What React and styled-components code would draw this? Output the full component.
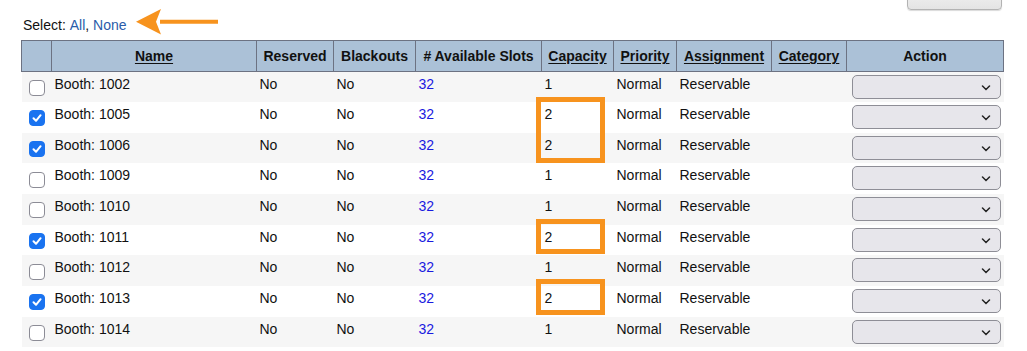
import styled, { createGlobalStyle } from "styled-components";

const GlobalStyle = createGlobalStyle`
  body {
    margin: 0;
    background: #fff;
    font-family: "Liberation Sans", Arial, sans-serif;
    font-size: 14px;
    color: #111;
  }
`;

const booths = [
  { id: 1002, checked: false, capacity: 1 },
  { id: 1005, checked: true, capacity: 2 },
  { id: 1006, checked: true, capacity: 2 },
  { id: 1009, checked: false, capacity: 1 },
  { id: 1010, checked: false, capacity: 1 },
  { id: 1011, checked: true, capacity: 2 },
  { id: 1012, checked: false, capacity: 1 },
  { id: 1013, checked: true, capacity: 2 },
  { id: 1014, checked: false, capacity: 1 },
];

const columns = [
  { label: "", width: 30 },
  { label: "Name", width: 205, sort: true },
  { label: "Reserved", width: 77 },
  { label: "Blackouts", width: 82 },
  { label: "# Available Slots", width: 126 },
  { label: "Capacity", width: 72, sort: true },
  { label: "Priority", width: 63, sort: true },
  { label: "Assignment", width: 95, sort: true },
  { label: "Category", width: 75, sort: true },
  { label: "Action", width: 157 },
];

// highlighted capacity cells, in table coordinates
const marks = [
  { top: 57, height: 66 },
  { top: 179, height: 35 },
  { top: 239, height: 36 },
];

function CheckBox({ checked }) {
  return (
    <Box $checked={checked}>
      {checked && (
        <svg width="12" height="12" viewBox="0 0 12 12">
          <path d="M2.5 6.3 L5 8.8 L9.6 3.2" fill="none" stroke="#fff" strokeWidth="2" strokeLinecap="round" strokeLinejoin="round" />
        </svg>
      )}
    </Box>
  );
}

function App() {
  return (
    <Page>
      <GlobalStyle />
      <TopBar>
        <SaveButton />
      </TopBar>
      <SelectLine>
        Select: <Link>All</Link>, <Link>None</Link>
        <Arrow width="86" height="26" viewBox="0 0 86 26">
          <path d="M24 10.8 H82 V14.8 H24 Z" fill="#f7931e" />
          <path d="M0 12.8 L25 0 L20 12.8 L25 25.5 Z" fill="#f7931e" />
        </Arrow>
      </SelectLine>
      <TableWrap>
        <Table>
          <colgroup>
            {columns.map((c, i) => (
              <col key={i} style={{ width: c.width }} />
            ))}
          </colgroup>
          <thead>
            <tr>
              {columns.map((c, i) => (
                <Th key={i}>{c.sort ? <SortLink>{c.label}</SortLink> : c.label}</Th>
              ))}
            </tr>
          </thead>
          <tbody>
            {booths.map((b, i) => (
              <Row key={b.id} $odd={i % 2 === 0}>
                <CheckCell>
                  <CheckBox checked={b.checked} />
                </CheckCell>
                <Td>Booth: {b.id}</Td>
                <Td>No</Td>
                <Td>No</Td>
                <Td>
                  <SlotLink>32</SlotLink>
                </Td>
                <Td>{b.capacity}</Td>
                <Td>Normal</Td>
                <Td>Reservable</Td>
                <Td />
                <ActionCell>
                  <Dropdown>
                    <svg width="10" height="6" viewBox="0 0 10 6">
                      <path d="M1.5 1 L5 4.5 L8.5 1" fill="none" stroke="#222" strokeWidth="1.5" strokeLinecap="round" />
                    </svg>
                  </Dropdown>
                </ActionCell>
              </Row>
            ))}
          </tbody>
        </Table>
        {marks.map((m, i) => (
          <Mark key={i} style={{ top: m.top, height: m.height }} />
        ))}
      </TableWrap>
    </Page>
  );
}

export default App;

const Page = styled.div`
  width: 1027px;
  height: 351px;
  overflow: hidden;
  padding-left: 21px;
  box-sizing: border-box;
`;

const TopBar = styled.div`
  display: flex;
  justify-content: flex-end;
  width: 982px;
  height: 9px;
`;

const SaveButton = styled.div`
  width: 93px;
  height: 22px;
  margin-top: -14px;
  margin-right: 1px;
  border: 1px solid #b3b3b3;
  border-radius: 4px;
  background: linear-gradient(#f4f4f4, #e4e4e4);
  box-shadow: 0 1px 1px rgba(0, 0, 0, 0.15);
`;

const SelectLine = styled.div`
  display: flex;
  align-items: center;
  height: 31px;
  padding-left: 2px;
  white-space: pre;
  line-height: 16px;
`;

const Link = styled.span`
  color: #2a5caa;
`;

const Arrow = styled.svg`
  margin-left: 9px;
  margin-top: -5px;
`;

const TableWrap = styled.div`
  position: relative;
  width: 982px;
`;

const Table = styled.table`
  border-collapse: collapse;
  table-layout: fixed;
  width: 982px;
`;

const Th = styled.th`
  height: 31px;
  padding: 0 2px;
  box-sizing: border-box;
  background: #abc1d7;
  border: 1px solid #6c7282;
  font-weight: bold;
  text-align: center;
  color: #111;
`;

const SortLink = styled.span`
  text-decoration: underline;
  text-underline-offset: 2px;
`;

const Row = styled.tr`
  height: 30.65px;
  background: ${(p) => (p.$odd ? "#f6f6f6" : "#fff")};
`;

const Td = styled.td`
  padding: 4px 3px 0;
  vertical-align: top;
  line-height: 16px;
  white-space: nowrap;
`;

const CheckCell = styled.td`
  padding: 0;
  vertical-align: middle;
  text-align: center;
`;

const Box = styled.span`
  display: inline-flex;
  align-items: center;
  justify-content: center;
  box-sizing: border-box;
  width: 16px;
  height: 16px;
  margin-top: 1px;
  border-radius: 4px;
  border: 1px solid ${(p) => (p.$checked ? "#1a73f0" : "#8c8c96")};
  background: ${(p) => (p.$checked ? "#1a73f0" : "#fff")};
  vertical-align: middle;
`;

const SlotLink = styled.span`
  color: #1a1ae0;
`;

const ActionCell = styled.td`
  padding: 3px 4px 0 5px;
  vertical-align: top;
`;

const Dropdown = styled.div`
  display: flex;
  align-items: center;
  justify-content: flex-end;
  box-sizing: border-box;
  width: 149px;
  height: 24px;
  padding: 2px 9px 0 0;
  border: 1px solid #8e8e96;
  border-radius: 5px;
  background: #e7e6eb;
`;

const Mark = styled.div`
  position: absolute;
  left: 515px;
  width: 69px;
  box-sizing: border-box;
  border: 5px solid #f7931e;
  pointer-events: none;
`;
